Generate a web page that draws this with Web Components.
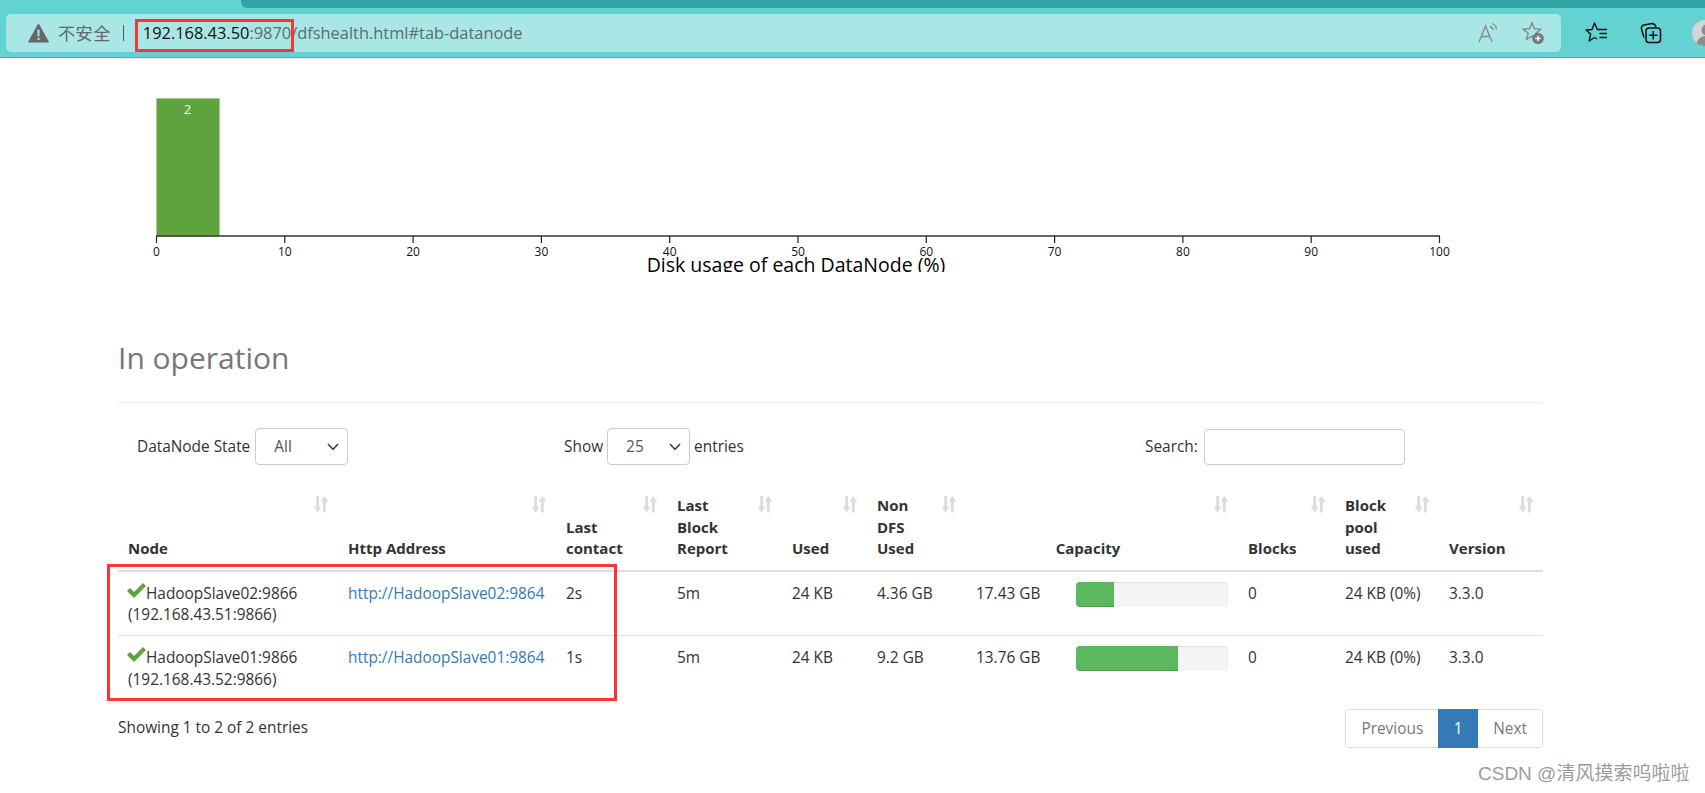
<!DOCTYPE html>
<html>
<head>
<meta charset="utf-8">
<style>
  html, body { margin: 0; padding: 0; background: #fff; overflow: hidden; }
  body { width: 1705px; height: 793px; position: relative; font-family: "Open Sans", "Noto Sans CJK SC", sans-serif; }
</style>
</head>
<body>
<browser-bar url-host="192.168.43.50" url-port=":9870" url-path="/dfshealth.html#tab-datanode"></browser-bar>
<page-content>
  <disk-histogram></disk-histogram>
  <section-title>In operation</section-title>
  <table-filters></table-filters>
  <node-table></node-table>
  <table-footer></table-footer>
</page-content>
<water-mark>CSDN @清风摸索呜啦啦</water-mark>

<script>
const browserBarTemplate = document.createElement('template');
browserBarTemplate.innerHTML = `
<style>
  :host { display: block; height: 58px; background: #63d2d2; border-bottom: 1px solid #47b0b0; box-sizing: border-box; overflow: hidden; position: relative; }
  .tabs { height: 8px; margin-left: 241px; background: #31a4a8; border-bottom-left-radius: 6px; }
  .row { display: flex; align-items: center; height: 49px; padding: 6px 0 6px 6px; box-sizing: border-box; }
  .address { flex: none; width: 1555px; height: 38px; background: #a8e7e6; border-radius: 5px; display: flex; align-items: center; box-sizing: border-box; padding: 0 16px 0 22px; position: relative; }
  .warn { width: 21px; height: 20px; margin-right: 9px; }
  .insecure { font: 17.2px "Noto Sans CJK SC", sans-serif; color: #666; letter-spacing: .4px; }
  .sep { width: 1px; height: 16px; background: #555; margin: 0 19px 0 12px; }
  .url { font: 16.4px "Open Sans", sans-serif; color: #5d6b6c; flex: 1; white-space: nowrap; }
  .url b { font-weight: 400; color: #111; }
  .hl { position: absolute; left: 129px; top: 5px; border: 3px solid #fb3434; width: 153px; height: 27px; }
  svg { display: block; flex: none; }
  .tools { display: flex; margin-left: 24px; gap: 30px; align-items: center; flex: none; }
  .avatar { width: 26px; height: 26px; border-radius: 50%; background: #d4d4d4; margin-left: 29px; flex: none; overflow: hidden; }
</style>
<div class="tabs"></div>
<div class="row">
  <div class="address">
    <svg class="warn" viewBox="0 0 21 20"><path d="M10.5 1 L20.5 19 H.5 Z" fill="#666" stroke="#666" stroke-linejoin="round"/><rect x="9.5" y="6.5" width="2" height="7" fill="#a8e7e6"/><rect x="9.5" y="15" width="2" height="2" fill="#a8e7e6"/></svg>
    <span class="insecure">不安全</span>
    <span class="sep"></span>
    <span class="url"><b id="host"></b><span id="port"></span><span id="path"></span></span>
    <svg width="22" height="22" viewBox="0 0 22 22" fill="none" stroke="#888" stroke-width="1.3" style="margin-right:22px"><path d="M2 20 L8.5 4 L15 20 M4.5 14.5 H12.5"/><path d="M13 4.5 a4 4 0 0 1 3 3.5 M15 1.5 a7 7 0 0 1 4.5 6"/></svg>
    <svg width="24" height="24" viewBox="0 0 24 24" fill="none"><path d="M11 1.5 L13.35 7.76 L20 8.1 L14.8 12.24 L16.6 18.7 L11 15 L5.4 18.7 L7.2 12.24 L2 8.1 L8.65 7.76 Z" stroke="#888" stroke-width="1.4" stroke-linejoin="round"/><circle cx="17" cy="17.5" r="5.8" fill="#777"/><path d="M14.2 17.5 H19.8 M17 14.7 V20.3" stroke="#fff" stroke-width="1.5"/></svg>
    <div class="hl"></div>
  </div>
  <div class="tools">
    <svg width="24" height="24" viewBox="0 0 24 24" fill="none" stroke="#111" stroke-width="1.4" stroke-linejoin="round"><path d="M15 8.5 H12.3 L9.5 2 L7 8.5 L1 9 L5.6 13 L4.2 20 L9.5 16.5 L12 18 "/><path d="M14.5 8.5 H22 M14.5 12.5 H22 M14.5 16.5 H22"/></svg>
    <svg width="24" height="24" viewBox="0 0 24 24" fill="none" stroke="#111" stroke-width="1.5"><path d="M5 16.5 L2.5 8 Q2 4.5 5 4 L13 2.5 Q16 2.5 17 6"/><rect x="7" y="7" width="14.5" height="14.5" rx="3"/><path d="M14.2 10 V18.5 M10 14.2 H18.5"/></svg>
  </div>
  <div class="avatar"><svg width="26" height="26" viewBox="0 0 26 26"><circle cx="15" cy="10" r="5.5" fill="#8c8c8c"/><path d="M4 26 Q5 16 15 16 Q25 16 26 26 Z" fill="#8c8c8c"/></svg></div>
</div>
`;

class BrowserBar extends HTMLElement {
  constructor() {
    super();
    this.attachShadow({mode: 'open'});
    this.shadowRoot.appendChild(browserBarTemplate.content.cloneNode(true));
    this.shadowRoot.getElementById('host').textContent = this.getAttribute('url-host');
    this.shadowRoot.getElementById('port').textContent = this.getAttribute('url-port');
    this.shadowRoot.getElementById('path').textContent = this.getAttribute('url-path');
  }
}
customElements.define('browser-bar', BrowserBar);

class PageContent extends HTMLElement {
  constructor() {
    super();
    this.attachShadow({mode: 'open'}).innerHTML = `
    <style>
      :host { display: block; width: 1425px; margin-left: 118px; color: #333; font: 15.4px/21.5px "Open Sans", sans-serif; }
    </style>
    <slot></slot>`;
  }
}
customElements.define('page-content', PageContent);

class DiskHistogram extends HTMLElement {
  constructor() {
    super();
    const shadowRoot = this.attachShadow({mode: 'open'});
    const x0 = 38.5, step = 128.3;
    let ticks = '';
    for (let i = 0; i <= 10; i++) {
      const x = x0 + i * step;
      ticks += `<line x1="${x}" y1="177" x2="${x}" y2="184" stroke="#222" stroke-width="1.2"/>
        <text x="${x}" y="197" text-anchor="middle" font-size="12" fill="#111">${i * 10}</text>`;
    }
    shadowRoot.innerHTML = `
    <style>
      :host { display: block; height: 214px; border-top: 1px solid #eee; box-sizing: border-box; }
      svg { display: block; font-family: "Open Sans", sans-serif; }
    </style>
    <svg width="1425" height="213" viewBox="0 0 1425 213">
      <rect x="38.5" y="39.5" width="63" height="137.5" fill="#5ea33e" stroke="#a5cb93" stroke-width="1"/>
      <text x="69.5" y="55" text-anchor="middle" font-size="12.5" fill="#fff">2</text>
      <line x1="38" y1="177" x2="1322" y2="177" stroke="#333" stroke-width="1.4"/>
      ${ticks}
      <text x="678" y="213" text-anchor="middle" font-size="19.5" fill="#000">Disk usage of each DataNode (%)</text>
    </svg>`;
  }
}
customElements.define('disk-histogram', DiskHistogram);

class SectionTitle extends HTMLElement {
  constructor() {
    super();
    this.attachShadow({mode: 'open'}).innerHTML = `
    <style>
      :host { display: block; margin-top: 67px; padding-bottom: 25px; border-bottom: 1px solid #eee; color: #777; font: 30px/38px "Open Sans", sans-serif; }
    </style>
    <slot></slot>`;
  }
}
customElements.define('section-title', SectionTitle);

class TableFilters extends HTMLElement {
  constructor() {
    super();
    const pick = (label, w, pad) => `
      <span class="select" style="width:${w}px;padding-left:${pad}px">${label}
        <svg width="12" height="8" viewBox="0 0 12 8" fill="none" stroke="#444" stroke-width="1.6"><path d="M1 1 L6 6.3 L11 1"/></svg>
      </span>`;
    this.attachShadow({mode: 'open'}).innerHTML = `
    <style>
      :host { display: flex; align-items: center; height: 37px; margin-top: 25px; }
      .state { margin-left: 19px; width: 427px; display: flex; align-items: center; gap: 5px; }
      .show { width: 581px; display: flex; align-items: center; gap: 4px; }
      .search { display: flex; align-items: center; gap: 6px; }
      .select { box-sizing: border-box; height: 37px; border: 1px solid #ccc; border-radius: 4px; display: flex; align-items: center; justify-content: space-between; padding-right: 8px; color: #555; }
      .input { width: 201px; height: 36px; box-sizing: border-box; border: 1px solid #ccc; border-radius: 4px; }
    </style>
    <div class="state">DataNode State ${pick('All', 93, 18)}</div>
    <div class="show">Show ${pick('25', 83, 18)} entries</div>
    <div class="search">Search: <div class="input"></div></div>`;
  }
}
customElements.define('table-filters', TableFilters);

class CapacityBar extends HTMLElement {
  constructor() {
    super();
    this.attachShadow({mode: 'open'}).innerHTML = `
    <style>
      :host { display: block; height: 25px; background: #f5f5f5; border-radius: 4px; overflow: hidden; box-shadow: inset 0 1px 2px rgba(0,0,0,.1); }
      div { height: 100%; width: ${this.getAttribute('percent')}%; background: #5cb85c; box-shadow: inset 0 -1px 0 rgba(0,0,0,.15); }
    </style>
    <div></div>`;
  }
}
customElements.define('capacity-bar', CapacityBar);

const sortIcon = `<svg class="sort" width="16" height="17" viewBox="0 0 15 16" preserveAspectRatio="none" fill="#dcdcdc"><path d="M3 0 H5.6 V10 H8 L4.3 15.5 L.6 10 H3 Z"/><path d="M9.4 15.5 H12 V5.5 H14.4 L10.7 0 L7 5.5 H9.4 Z"/></svg>`;
const okIcon = `<svg class="ok" width="19" height="15" viewBox="0 0 19 15"><path d="M0 8 L3 5 L7 9 L16 0 L19 3 L7 15 Z" fill="#5fa341"/></svg>`;

class NodeTable extends HTMLElement {
  constructor() {
    super();
    const heads = [
      ['Node'], ['Http Address'], ['Last<br>contact'], ['Last<br>Block<br>Report'], ['Used'],
      ['Non<br>DFS<br>Used'], ['Capacity', 2], ['Blocks'], ['Block<br>pool<br>used'], ['Version']
    ];
    const nodes = [
      {name: 'HadoopSlave02', ip: '192.168.43.51', contact: '2s', nonDfs: '4.36 GB', cap: '17.43 GB', percent: 25},
      {name: 'HadoopSlave01', ip: '192.168.43.52', contact: '1s', nonDfs: '9.2 GB', cap: '13.76 GB', percent: 67}
    ];
    this.attachShadow({mode: 'open'}).innerHTML = `
    <style>
      :host { display: block; margin-top: 24px; position: relative; }
      table { width: 1425px; table-layout: fixed; border-collapse: collapse; }
      th { position: relative; box-sizing: border-box; height: 81px; padding: 6px 10px 10px 10px; text-align: left; vertical-align: bottom; border-bottom: 2px solid #ddd; font-weight: 700; font-size: 15px; line-height: 21.5px; color: #333; }
      th.cap { text-align: center; padding-right: 38px; }
      .sort { position: absolute; right: 9px; top: 7px; }
      td { box-sizing: border-box; height: 65px; padding: 11px 10px 8px; vertical-align: top; border-bottom: 1px solid #ddd; line-height: 21.5px; white-space: nowrap; }
      tr:last-child td { border-bottom: 0; height: 63px; }
      a { color: #337ab7; text-decoration: none; }
      .ok { vertical-align: 1px; margin-left: -1px; }
      capacity-bar { margin-top: -1px; }
      .hl { position: absolute; left: -11px; top: 75px; width: 504px; height: 131px; border: 3px solid #fb3434; }
    </style>
    <table>
      <colgroup>${[220, 218, 111, 115, 85, 99, 100, 172, 97, 104, 104].map(w => `<col style="width:${w}px">`).join('')}</colgroup>
      <thead><tr>${heads.map(h => `<th ${h[1] ? 'class="cap" colspan="2"' : ''}>${h[0]}${sortIcon}</th>`).join('')}</tr></thead>
      <tbody>${nodes.map(n => `<tr>
        <td>${okIcon}${n.name}:9866<br>(${n.ip}:9866)</td>
        <td><a>http://${n.name}:9864</a></td>
        <td>${n.contact}</td>
        <td>5m</td>
        <td>24 KB</td>
        <td>${n.nonDfs}</td>
        <td>${n.cap}</td>
        <td><capacity-bar percent="${n.percent}"></capacity-bar></td>
        <td>0</td>
        <td>24 KB (0%)</td>
        <td>3.3.0</td>
      </tr>`).join('')}</tbody>
    </table>
    <div class="hl"></div>`;
  }
}
customElements.define('node-table', NodeTable);

class TableFooter extends HTMLElement {
  constructor() {
    super();
    this.attachShadow({mode: 'open'}).innerHTML = `
    <style>
      :host { display: flex; justify-content: space-between; align-items: flex-start; margin-top: 10px; }
      .info { margin-top: 8px; }
      .pager { display: flex; height: 39px; border: 1px solid #ddd; border-radius: 4px; box-sizing: border-box; color: #777; line-height: 37px; }
      .pager span { padding: 0 15px; }
      .pager .on { background: #337ab7; color: #fff; margin: -1px 0; padding: 1px 0; width: 40px; text-align: center; line-height: 37px; }
    </style>
    <div class="info">Showing 1 to 2 of 2 entries</div>
    <div class="pager"><span>Previous</span><span class="on">1</span><span>Next</span></div>`;
  }
}
customElements.define('table-footer', TableFooter);

class WaterMark extends HTMLElement {
  constructor() {
    super();
    this.attachShadow({mode: 'open'}).innerHTML = `
    <style>
      :host { position: absolute; left: 1478px; top: 761px; color: #9c9c9c; font: 19px/26px "Liberation Sans", "Noto Sans CJK SC", sans-serif; white-space: nowrap; }
    </style>
    <slot></slot>`;
  }
}
customElements.define('water-mark', WaterMark);
</script>
</body>
</html>
